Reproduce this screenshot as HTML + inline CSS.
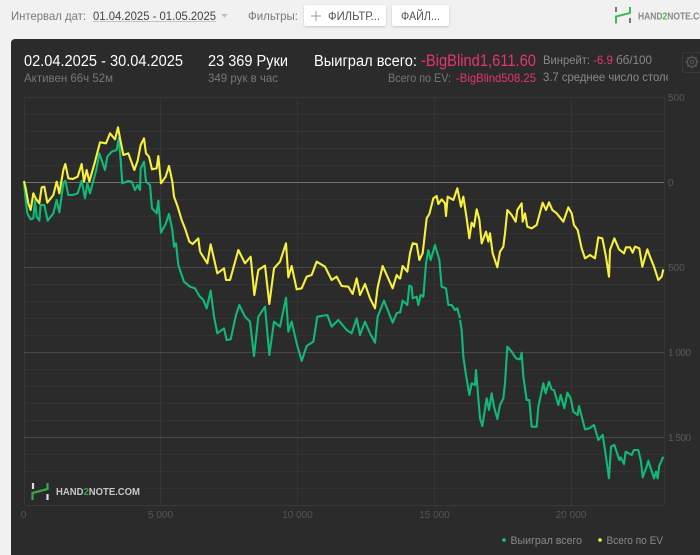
<!DOCTYPE html>
<html><head><meta charset="utf-8"><style>
html,body{margin:0;padding:0;background:#f1f1f1;width:700px;height:555px;overflow:hidden}
svg{display:block;font-family:"Liberation Sans",sans-serif;filter:blur(.3px)}
</style></head><body>
<svg width="700" height="555" viewBox="0 0 700 555" xmlns="http://www.w3.org/2000/svg">
<defs>
<filter id="s" x="-10%" y="-20%" width="120%" height="150%"><feDropShadow dx="0" dy="1" stdDeviation="1.2" flood-color="#000" flood-opacity=".18"/></filter>
<clipPath id="c1"><rect x="540" y="68" width="128" height="18"/></clipPath>
</defs>
<rect width="700" height="555" fill="#f1f1f1"/>
<text x="11" y="20" font-size="12" fill="#7a7a7a" textLength="75" lengthAdjust="spacingAndGlyphs">Интервал дат:</text>
<text x="93" y="20" font-size="12" fill="#444" textLength="123" lengthAdjust="spacingAndGlyphs">01.04.2025 - 01.05.2025</text>
<line x1="93" x2="216" y1="21.5" y2="21.5" stroke="#c4c4c4"/>
<path d="M221 14H228L224.500 17.500Z" fill="#bdbdbd"/>
<text x="248" y="20" font-size="12" fill="#7a7a7a" textLength="50" lengthAdjust="spacingAndGlyphs">Фильтры:</text>
<rect x="304" y="5" width="82" height="21" rx="2" fill="#fff" filter="url(#s)"/>
<path d="M316 11V21M311 16H321" stroke="#aaa" stroke-width="1.200"/>
<text x="328" y="20" font-size="11.500" fill="#555" textLength="52" lengthAdjust="spacingAndGlyphs">ФИЛЬТР...</text>
<rect x="392" y="5" width="57" height="21" rx="2" fill="#fff" filter="url(#s)"/>
<text x="401" y="20" font-size="11.500" fill="#555" textLength="39" lengthAdjust="spacingAndGlyphs">ФАЙЛ...</text>
<path d="M616 7V12M630 18V23" stroke="#777" stroke-width="2"/>
<path d="M616 23.500V16.500L630 13V7" stroke="#3dbb4e" stroke-width="2" fill="none"/>
<text x="638" y="19.500" font-size="10" font-weight="bold" fill="#888" textLength="75" lengthAdjust="spacingAndGlyphs">HAND<tspan fill="#3dbb4e">2</tspan>NOTE.COM</text>

<path d="M15 39H700V555H11V43A4 4 0 0 1 15 39Z" fill="#2b2b2b"/>

<g stroke="#333" stroke-width="1">
<path d="M24 114.500H664M24 131.500H664M24 148.500H664M24 165.500H664M24 199.500H664M24 216.500H664M24 233.500H664M24 250.500H664M24 284.500H664M24 301.500H664M24 318.500H664M24 335.500H664M24 369.500H664M24 386.500H664M24 403.500H664M24 420.500H664M24 454.500H664M24 471.500H664M24 488.500H664"/>
<path d="M24 97.500H664M24 505.500H664" stroke="#383838"/>
<path d="M24.500 97V505M160.500 97V505M297.500 97V505M434.500 97V505M571.500 97V505M664.500 97V505" stroke="#353535"/>
</g>
<path d="M24 267.500H664M24 352.500H664M24 437.500H664" stroke="#484848"/>
<path d="M24 182.500H664" stroke="#707070"/>

<g fill="none" stroke="#10b976" stroke-width="6.300" stroke-linejoin="round">
<polyline transform="scale(.33333) translate(0 300)" points="72,245 76,290 82,340 92,358 100,355 105,300 110,350 118,362 122,315 133,315 143,362 160,340 170,300 178,337 190,250 196,242 205,285 218,285 233,280 245,242 255,295 262,250 270,280 290,205 298,160 315,210 322,170 335,155 350,150 356,115 362,180 367,250 385,243 395,245 405,270 413,255 420,270 422,205 432,185 438,245 450,255 456,325 470,340 475,302 483,398 497,372 507,342 517,390 522,440 528,430 535,495 540,510 552,545 570,560 585,565 600,591"/>
<polyline transform="translate(200 200) scale(.33333)" points="0,290 10,300 20,325 32,272 42,350 52,400 72,385 80,420 92,418 108,345 118,315 135,350 150,365 162,468 175,350 195,320 208,465 222,365 240,380 258,293 265,395 275,365 290,430 305,483 320,438 340,425 352,350 382,345 395,380 415,360 440,390 455,400 470,355 480,405 495,365 510,400 525,428 533,350 552,302 578,368 590,340 600,336"/>
<polyline transform="translate(400 170) scale(.33333)" points="0,430 8,392 22,405 28,347 35,350 38,385 50,380 55,405 62,375 70,380 78,280 85,240 92,270 105,225 118,270 125,350 138,355 145,405 155,405 165,420 172,415 180,445"/>
<polyline transform="translate(430 320) scale(.33333)" points="90,0 95,30 100,110 108,165 118,225 125,190 135,195 138,150 145,235 150,295 157,318 170,235 177,270 185,220 192,260 202,297 210,255 220,235 225,190 232,80 245,95 258,115 270,118 275,98 280,170 290,240 298,240 305,320 320,320 325,260 340,190 347,220 357,185 365,208 372,210 385,255 392,225 403,265 412,218 422,235 430,275 443,285 447,258 465,328 478,325 492,315 505,360 518,345 525,390 537,475 543,380 553,375 568,420 572,412 582,432 587,395 605,405 612,390 625,390 633,425 638,472 650,440 655,422 672,475 678,455 683,475 688,437 700,410"/>
</g>
<g fill="none" stroke="#f7f03c" stroke-width="6.300" stroke-linejoin="round">
<polyline transform="scale(.33333) translate(0 300)" points="72,243 78,270 85,310 92,330 100,280 107,295 118,310 125,262 133,260 142,308 160,285 170,245 178,280 190,210 196,192 205,235 218,237 233,230 245,192 252,245 260,210 268,245 285,185 300,127 318,130 330,100 345,118 354,82 362,125 370,165 385,160 403,210 413,182 422,135 432,115 438,160 447,170 456,208 470,205 475,168 483,250 497,230 507,198 517,245 522,290 533,320 545,360 555,385 568,425 578,432 595,415 600,455"/>
<polyline transform="translate(200 200) scale(.33333)" points="0,155 22,190 32,133 52,220 72,205 78,240 90,240 115,150 135,190 152,170 163,285 175,210 195,197 208,312 222,205 240,185 258,130 265,232 275,198 290,268 305,265 320,230 335,225 350,185 375,200 395,240 410,230 425,258 445,260 458,282 470,235 480,285 495,252 510,295 525,325 533,262 548,198 578,265 590,225 600,237"/>
<polyline transform="translate(400 170) scale(.33333)" points="0,328 8,288 22,305 30,250 38,220 50,222 58,270 68,250 80,145 88,132 100,85 110,78 115,102 125,88 135,100 138,138 143,80 160,90 172,55 178,85 183,110 190,80 200,145 208,205 215,158 222,170 230,118 238,148 245,220 258,185 265,215 270,190 278,250 292,292 300,245 310,230 315,190 322,120 335,135 347,155 352,120 365,100 368,155 375,130 382,170 395,175 410,165 428,98 438,120 447,97 457,120 470,130 490,155 505,112 515,130 522,165 533,180 545,235 555,265 570,255 585,265 595,202 607,205 617,255 627,320 630,240 643,205 657,238 672,250 678,232 690,232 698,248 705,230 718,235 727,290 742,238 750,260 762,290 775,330 785,320 790,298"/>
</g>

<rect x="25" y="480" width="120" height="25" fill="#2a2a2a"/>
<path d="M33 483V489M47.500 494V500" stroke="#ddd" stroke-width="2.200"/>
<path d="M32.500 500V493L47.500 489V483" stroke="#35a947" stroke-width="2.200" fill="none"/>
<text x="56" y="495" font-size="10.500" font-weight="bold" fill="#c8c8c8" textLength="84" lengthAdjust="spacingAndGlyphs">HAND<tspan fill="#35a947">2</tspan>NOTE.COM</text>

<text x="24" y="66" font-size="15.500" fill="#fff" textLength="159" lengthAdjust="spacingAndGlyphs">02.04.2025 - 30.04.2025</text>
<text x="24" y="82" font-size="12" fill="#777" textLength="89" lengthAdjust="spacingAndGlyphs">Активен 66ч 52м</text>
<text x="208" y="66" font-size="15.500" fill="#fff" textLength="80" lengthAdjust="spacingAndGlyphs">23 369 Руки</text>
<text x="208" y="82" font-size="12" fill="#777" textLength="70" lengthAdjust="spacingAndGlyphs">349 рук в час</text>
<text x="314" y="66" font-size="15.500" fill="#fff" textLength="103" lengthAdjust="spacingAndGlyphs">Выиграл всего:</text>
<text x="421" y="66" font-size="16.500" fill="#e5356f" textLength="115" lengthAdjust="spacingAndGlyphs">-BigBlind1,611.60</text>
<text x="388" y="82" font-size="12" fill="#777" textLength="63" lengthAdjust="spacingAndGlyphs">Всего по EV:</text>
<text x="456" y="82" font-size="12" fill="#e5356f" textLength="80" lengthAdjust="spacingAndGlyphs">-BigBlind508.25</text>
<text x="543" y="64" font-size="12" fill="#8a8a8a" textLength="47" lengthAdjust="spacingAndGlyphs">Винрейт:</text>
<text x="593" y="64" font-size="12" fill="#e5356f" textLength="20" lengthAdjust="spacingAndGlyphs">-6.9</text>
<text x="616" y="64" font-size="12" fill="#8a8a8a" textLength="36" lengthAdjust="spacingAndGlyphs">бб/100</text>
<g clip-path="url(#c1)"><text x="543" y="81" font-size="12" fill="#8a8a8a" textLength="135" lengthAdjust="spacingAndGlyphs">3.7 среднее число столов</text></g>

<rect x="682.500" y="52.500" width="22" height="20" rx="2.500" fill="none" stroke="#393939"/>
<circle cx="692" cy="62" r="4.800" fill="none" stroke="#555" stroke-width="1.400"/>
<circle cx="692" cy="62" r="1.800" fill="none" stroke="#555"/>
<path d="M692 55.500V57.500M692 66.500V68.500M685.500 62H687.500M696.500 62H698.500M687.400 57.400L688.800 58.800M695.200 65.200L696.600 66.600M696.600 57.400L695.200 58.800M688.800 65.200L687.400 66.600" stroke="#555" stroke-width="1.400"/>

<g font-size="10" fill="#5a5a5a">
<text x="668" y="101">500</text>
<text x="668" y="186">0</text>
<text x="668" y="271">500</text>
<text x="668" y="356" textLength="23">1 000</text>
<text x="668" y="441" textLength="23">1 500</text>
</g>
<g font-size="10" fill="#555" text-anchor="middle">
<text x="23.500" y="518">0</text>
<text x="160.500" y="518">5 000</text>
<text x="297.500" y="518">10 000</text>
<text x="434.500" y="518">15 000</text>
<text x="571" y="518">20 000</text>
</g>
<circle cx="504" cy="540" r="1.800" fill="#10c97e"/>
<text x="510.500" y="544" font-size="11" fill="#8a8a8a" textLength="71.500" lengthAdjust="spacingAndGlyphs">Выиграл всего</text>
<circle cx="600" cy="540" r="1.800" fill="#f7f03c"/>
<text x="606.500" y="544" font-size="11" fill="#8a8a8a" textLength="56.500" lengthAdjust="spacingAndGlyphs">Всего по EV</text>
</svg>
</body></html>
